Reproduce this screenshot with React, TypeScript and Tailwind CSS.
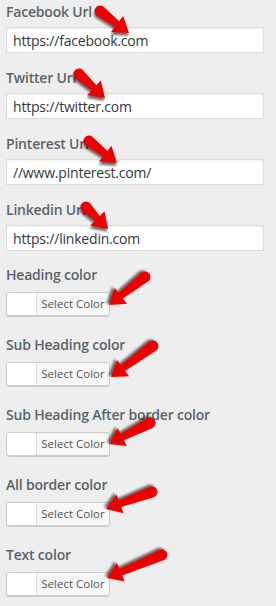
import React from "react";

const font = { fontFamily: '"Open Sans", "Noto Sans", sans-serif' };

function UrlField({ label, value, last }: { label: string; value: string; last?: boolean }) {
  return (
    <div className={last ? "flex flex-col pb-[14px]" : "flex flex-col pb-[15px]"}>
      <label className="h-5 leading-5 text-[14px] font-semibold text-[#5b636b] mb-[5px] tracking-[-0.2px]">{label}</label>
      <div className="h-[26px] w-[258px] bg-white border border-[#dddddd] shadow-[inset_0_1px_2px_rgba(0,0,0,0.07)] flex items-center px-[6px] text-[14px] text-[#32373c] tracking-[-0.2px]">
        {value}
      </div>
    </div>
  );
}

function ColorField({ label }: { label: string }) {
  return (
    <div className="flex flex-col pb-[19px]">
      <label className="h-5 leading-5 text-[14px] font-semibold text-[#5b636b] mb-[7px] tracking-[-0.2px]">{label}</label>
      <div className="flex h-[24px] w-[104px] rounded-[3px] border border-[#cccccc] shadow-[0_1px_0_#cccccc] overflow-hidden">
        <div className="w-[30px] bg-white border-r border-[#dddddd]" />
        <div className="flex-1 bg-[#f7f7f7] flex items-center justify-center text-[11.5px] text-[#555555]">Select Color</div>
      </div>
    </div>
  );
}

// red annotation arrow from tail (x1,y1) to tip (x2,y2)
function Arrow({ x1, y1, x2, y2 }: { x1: number; y1: number; x2: number; y2: number }) {
  const dx = x2 - x1;
  const dy = y2 - y1;
  const len = Math.sqrt(dx * dx + dy * dy);
  const ang = (Math.atan2(dy, dx) * 180) / Math.PI;
  const h = 15;
  const d = `M0,-5.5 L${len - h},-3.5 L${len - h},-10 L${len},0 L${len - h},10 L${len - h},3.5 L0,5.5 A5.5,5.5 0 0 1 0,-5.5 Z`;
  return (
    <g transform={`translate(${x1},${y1}) rotate(${ang})`}>
      <path d={d} fill="#1a0000" opacity="0.6" transform="translate(1.5,2.5)" filter="url(#blur)" />
      <path d={d} fill="#ee0000" />
    </g>
  );
}

export default function App() {
  return (
    <div className="relative w-[276px] min-h-[606px] bg-[#eeeeee] pl-[6px] pt-[2px]" style={font}>
      <UrlField label="Facebook Url" value="https://facebook.com" />
      <UrlField label="Twitter Url" value="https://twitter.com" />
      <UrlField label="Pinterest Url" value="//www.pinterest.com/" />
      <UrlField label="Linkedin Url" value="https://linkedin.com" last />
      <ColorField label="Heading color" />
      <ColorField label="Sub Heading color" />
      <ColorField label="Sub Heading After border color" />
      <ColorField label="All border color" />
      <ColorField label="Text color" />

      <svg className="absolute inset-0 pointer-events-none" width="276" height="606">
        <defs>
          <filter id="blur" x="-20%" y="-50%" width="140%" height="200%">
            <feGaussianBlur stdDeviation="1" />
          </filter>
        </defs>
        <Arrow x1={100} y1={11} x2={129} y2={33} />
        <Arrow x1={79} y1={74} x2={105} y2={98} />
        <Arrow x1={89} y1={141} x2={117} y2={163} />
        <Arrow x1={86} y1={207} x2={108} y2={229} />
        <Arrow x1={145} y1={277} x2={109} y2={305} />
        <Arrow x1={153} y1={346} x2={111} y2={377} />
        <Arrow x1={150} y1={423} x2={109} y2={444} />
        <Arrow x1={152} y1={492} x2={106} y2={509} />
        <Arrow x1={162} y1={555} x2={107} y2={578} />
      </svg>
    </div>
  );
}
